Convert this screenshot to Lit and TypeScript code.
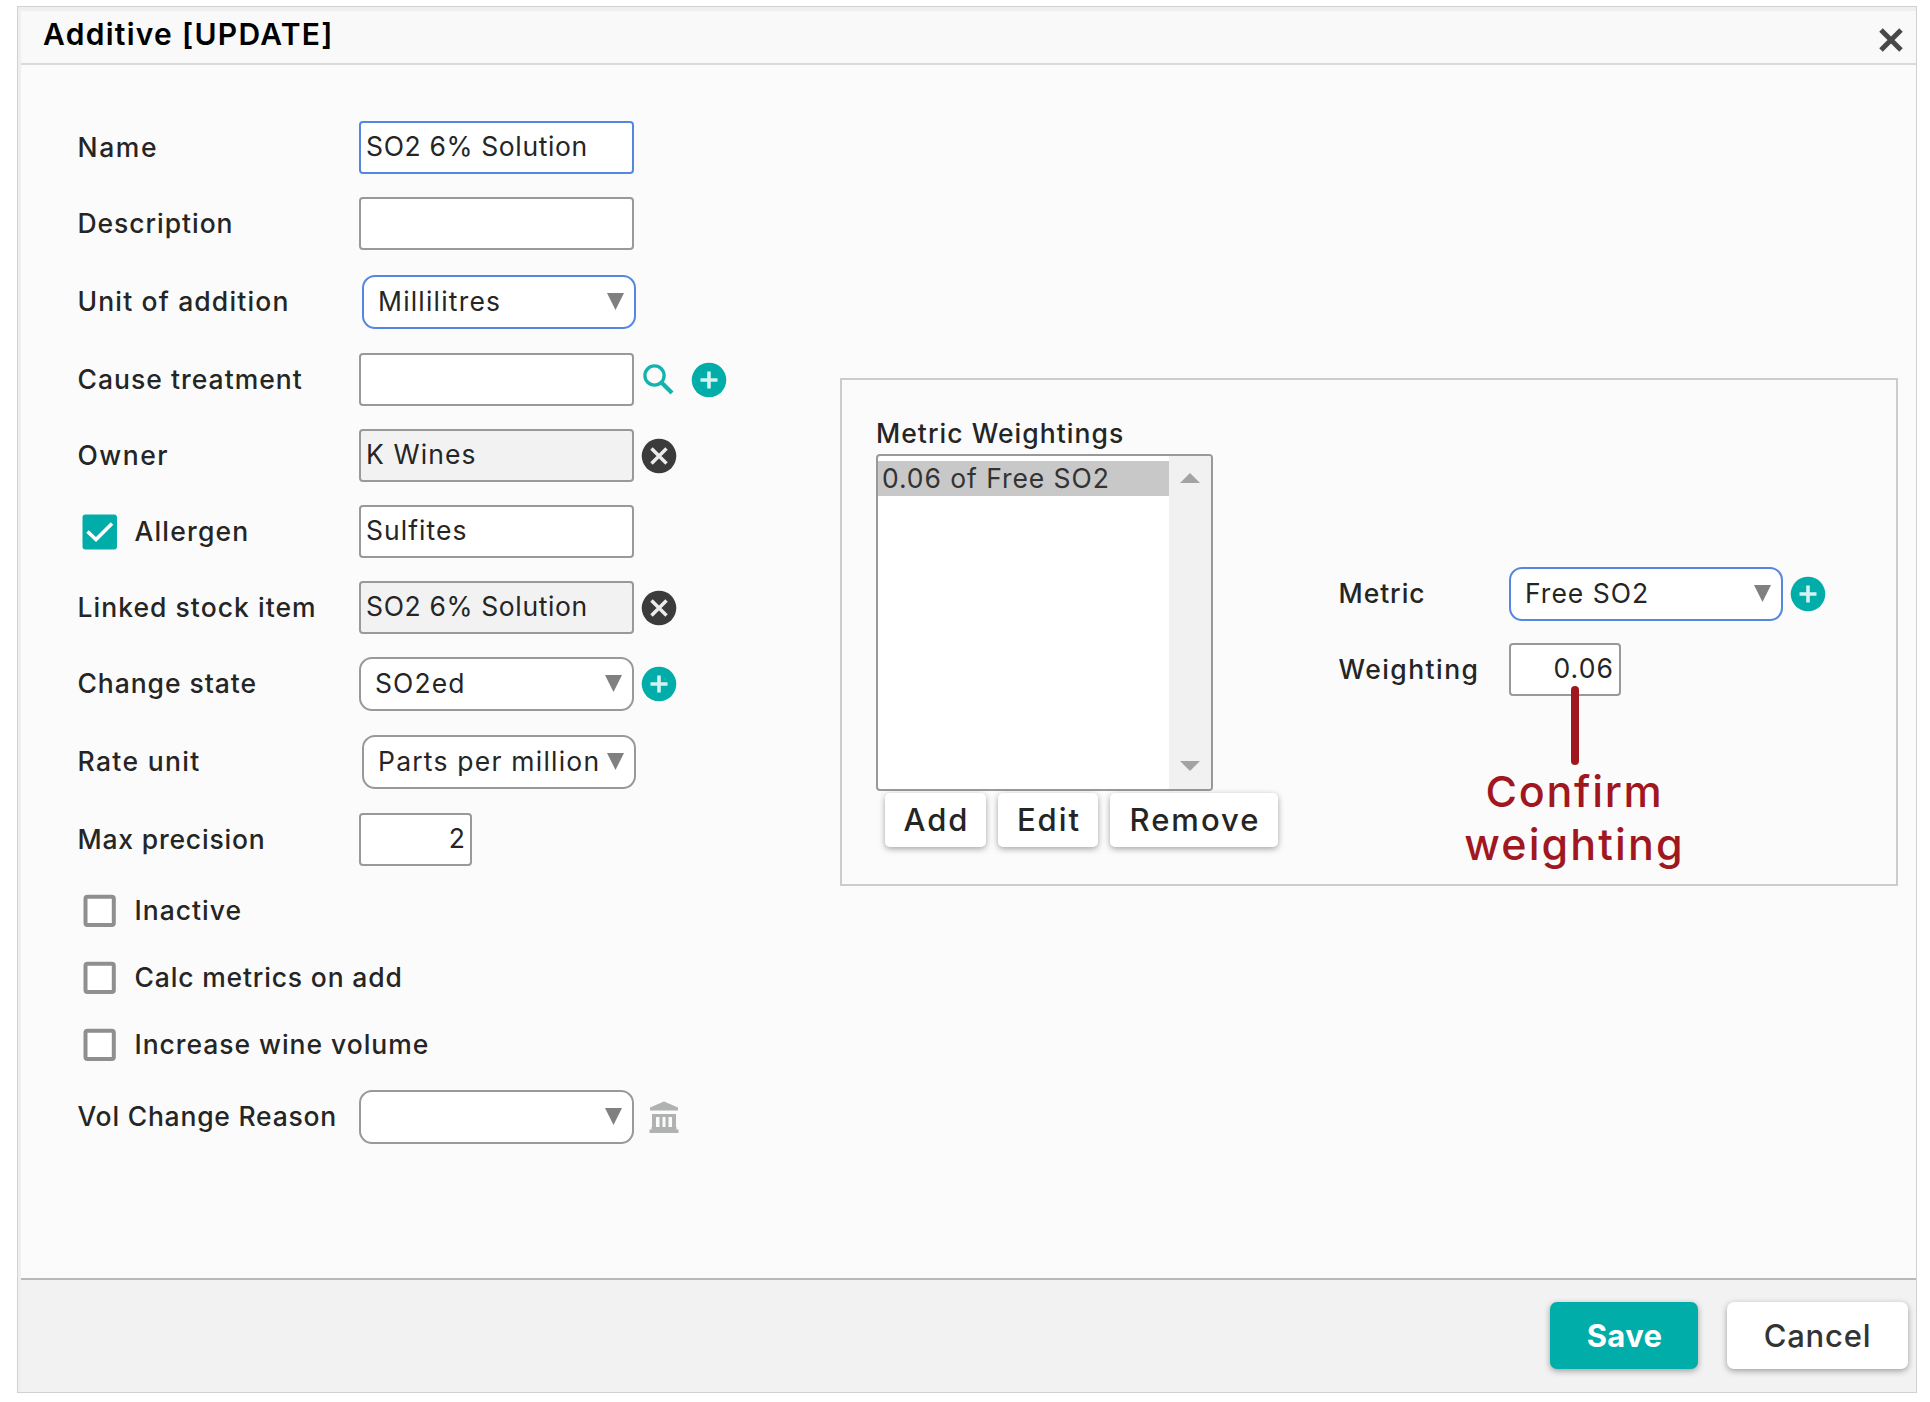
import { LitElement, html, css, nothing } from "lit";
import { customElement } from "lit/decorators.js";

type Icon = "search" | "plus" | "clear" | "bank";

interface Row {
  cls: string;
  label: string;
  /** Letter spacing of the label and of the value, in px. */
  track: number;
  valueTrack?: number;
  kind: "text" | "select" | "short" | "none";
  value?: string;
  check?: "on" | "off";
  active?: boolean;
  readonly?: boolean;
  icons?: Icon[];
}

const ROWS: Row[] = [
  { cls: "r-name", label: "Name", track: 1.6, kind: "text", value: "SO2 6% Solution", valueTrack: 0.63, active: true },
  { cls: "r-desc", label: "Description", track: 0.95, kind: "text" },
  { cls: "r-unit", label: "Unit of addition", track: 1.15, kind: "select", value: "Millilitres", valueTrack: 1.2, active: true },
  { cls: "r-cause", label: "Cause treatment", track: 1.02, kind: "text", icons: ["search", "plus"] },
  { cls: "r-owner", label: "Owner", track: 1.5, kind: "text", value: "K Wines", valueTrack: 1.1, readonly: true, icons: ["clear"] },
  { cls: "r-allergen", label: "Allergen", track: 1.2, kind: "text", value: "Sulfites", valueTrack: 1.05, check: "on" },
  { cls: "r-stock", label: "Linked stock item", track: 1.03, kind: "text", value: "SO2 6% Solution", valueTrack: 0.63, readonly: true, icons: ["clear"] },
  { cls: "r-state", label: "Change state", track: 0.93, kind: "select", value: "SO2ed", valueTrack: 1.1, icons: ["plus"] },
  { cls: "r-rate", label: "Rate unit", track: 1.35, kind: "select", value: "Parts per million", valueTrack: 1.22 },
  { cls: "r-max", label: "Max precision", track: 0.8, kind: "short", value: "2", valueTrack: 0 },
  { cls: "r-check", label: "Inactive", track: 1, kind: "none", check: "off" },
  { cls: "r-check", label: "Calc metrics on add", track: 0.83, kind: "none", check: "off" },
  { cls: "r-check", label: "Increase wine volume", track: 0.95, kind: "none", check: "off" },
  { cls: "r-vol", label: "Vol Change Reason", track: 0.77, kind: "select", value: "", icons: ["bank"] },
];

const METRIC_ROWS: Row[] = [
  { cls: "r-metric", label: "Metric", track: 0.95, kind: "select", value: "Free SO2", valueTrack: 1, active: true, icons: ["plus"] },
  { cls: "r-weight", label: "Weighting", track: 1.45, kind: "short", value: "0.06", valueTrack: 1.1 },
];

const ICONS = {
  search: html`<svg class="icon" width="36" height="36" viewBox="0 0 36 36">
    <circle cx="13.500" cy="13.500" r="9.600" fill="none" stroke="#14b3ae" stroke-width="3.300" />
    <path d="M20.500 20.500L31 31" stroke="#14b3ae" stroke-width="4.200" />
  </svg>`,
  plus: html`<svg class="icon" width="36" height="36" viewBox="0 0 36 36">
    <circle cx="18" cy="18" r="17.300" fill="#00ada8" />
    <path d="M18 9.500V26.500M9.500 18H26.500" stroke="#d4f2f1" stroke-width="3.600" />
  </svg>`,
  clear: html`<svg class="icon" width="36" height="36" viewBox="0 0 36 36">
    <circle cx="18" cy="18" r="17.300" fill="#3a3b3a" />
    <path d="M10.500 10.500L25.500 25.500M25.500 10.500L10.500 25.500" stroke="#ececec" stroke-width="3.500" />
  </svg>`,
  bank: html`<svg class="icon bank" width="30" height="32" viewBox="0 0 30 32">
    <path
      d="M15 0.500L29 6.500V9.500H1V6.500Z M3 13H27V16H3Z M3 16H7V26H3Z M10.500 16H13.500V26H10.500Z M16.500 16H19.500V26H16.500Z M23 16H27V26H23Z M2.500 26H27.500V28.500H29.500V32H0.500V28.500H2.500Z"
      fill="#b0b2b1"
    />
  </svg>`,
};

const checkbox = (state: "on" | "off") =>
  state === "on"
    ? html`<svg class="check" width="36" height="36" viewBox="0 0 36 36">
        <rect x="0.500" y="0.500" width="34.500" height="35" rx="3" fill="#00ada8" />
        <path d="M5.500 17.500L14 25.500L30 9.500" fill="none" stroke="#fff" stroke-width="3.600" />
      </svg>`
    : html`<svg class="check" width="36" height="36" viewBox="0 0 36 36">
        <rect x="3.500" y="3.700" width="28.300" height="28.300" rx="2" fill="#fff" stroke="#8f8f8f" stroke-width="4" />
      </svg>`;

const caret = html`<svg class="caret" width="17" height="17" viewBox="0 0 17 17">
  <path d="M0 0H17L8.500 17Z" fill="#808080" />
</svg>`;

@customElement("app-root")
export class AppRoot extends LitElement {
  static styles = css`
    :host {
      display: block;
      width: 1930px;
      height: 1402px;
      background: #fff;
      box-sizing: border-box;
      padding: 6px 13px 9px 17px;
      font-family: Inter, "Open Sans", sans-serif;
      font-size: 26.5px;
      color: #252525;
      overflow: hidden;
    }
    * {
      box-sizing: border-box;
    }
    svg {
      display: block;
      flex: none;
    }
    .dialog {
      display: flex;
      flex-direction: column;
      height: 1387px;
      width: 1900px;
      border: 1px solid #d1d1d1;
      background: #efefef;
      padding: 4px 0 0 3px;
    }
    .head {
      flex: none;
      height: 54px;
      background: #f9f9f9;
      border-bottom: 2px solid #dadada;
      display: flex;
      justify-content: space-between;
      padding: 0 13px 0 22px;
    }
    .title {
      font-size: 30px;
      line-height: 47px;
      font-weight: 600;
      color: #000;
      white-space: nowrap;
      letter-spacing: 1.28px;
    }
    .close {
      margin-top: 17px;
    }
    .body {
      flex: 1;
      background: #fbfbfb;
      display: flex;
      align-items: flex-start;
      padding-left: 57px;
    }
    .form {
      width: 762px;
      flex: none;
      padding-top: 56px;
    }
    .row {
      display: flex;
      align-items: center;
      height: 53px;
      margin-bottom: 23px;
    }
    .r-desc,
    .r-unit,
    .r-state,
    .r-rate {
      margin-bottom: 25px;
    }
    .r-max {
      margin-bottom: 18px;
    }
    .r-check {
      margin-bottom: 14px;
    }
    .r-vol {
      margin-top: 19px;
    }
    .lab {
      width: 281px;
      flex: none;
      display: flex;
      align-items: center;
      font-weight: 500;
      white-space: nowrap;
    }
    .label-text {
      padding-bottom: 2px;
      margin-left: -0.5px;
    }
    .check {
      margin: 1px 17px 0 4px;
    }
    .field {
      width: 275px;
      height: 53px;
      flex: none;
      background: #fff;
      border: 2px solid #999;
      border-radius: 4px;
      padding: 0 5px 4px;
      display: flex;
      align-items: center;
      white-space: nowrap;
    }
    .active {
      border-color: #5487e0;
    }
    .readonly {
      background: #f2f2f2;
    }
    .select {
      height: 54px;
      border-radius: 13px;
      padding: 0 10px 0 14px;
      justify-content: space-between;
    }
    .select .value {
      padding-bottom: 2px;
    }
    .r-unit .select,
    .r-rate .select {
      margin-left: 3px;
      width: 274px;
    }
    .short {
      width: 113px;
      justify-content: flex-end;
    }
    .icon {
      margin-left: 7px;
    }
    .icon + .icon {
      margin-left: 14px;
    }
    .bank {
      margin-left: 15px;
    }
    .panel {
      width: 1058px;
      height: 508px;
      margin-top: 313px;
      flex: none;
      border: 2px solid #ccc;
      display: flex;
      padding-left: 34px;
      position: relative;
    }
    .weights {
      width: 463px;
      padding-top: 34px;
      flex: none;
    }
    .heading {
      font-weight: 500;
      line-height: 38px;
      height: 40px;
      white-space: nowrap;
      letter-spacing: 1.04px;
    }
    .list {
      width: 337px;
      height: 337px;
      border: 2px solid #999;
      border-radius: 4px;
      background: #fff;
      display: flex;
      overflow: hidden;
    }
    .items {
      flex: 1;
      padding-top: 5px;
    }
    .item {
      height: 35px;
      line-height: 34px;
      padding-left: 4px;
      background: #c8c8c8;
      color: #333;
      letter-spacing: 0.93px;
      white-space: nowrap;
    }
    .bar {
      width: 42px;
      background: #f1f1f1;
      display: flex;
      flex-direction: column;
      align-items: center;
      justify-content: space-between;
      padding: 17px 0 18px;
    }
    .buttons {
      display: flex;
      gap: 12px;
      padding: 2px 0 0 9px;
    }
    .btn {
      height: 54px;
      border-radius: 5px;
      background: #fff;
      box-shadow: 0 2px 6px rgba(0, 0, 0, 0.35);
      font-size: 31px;
      font-weight: 500;
      display: flex;
      align-items: center;
      justify-content: center;
      flex: none;
      letter-spacing: 2px;
      padding: 0 0 1px 2px;
    }
    .b-add {
      width: 101px;
    }
    .b-edit {
      width: 100px;
    }
    .b-remove {
      width: 168px;
    }
    .metric {
      padding-top: 187px;
      width: 530px;
    }
    .metric .lab {
      width: 170px;
    }
    .metric .select {
      width: 274px;
    }
    .metric .short {
      width: 112px;
    }
    .note {
      position: absolute;
      left: 600px;
      top: 306px;
      width: 265px;
      display: flex;
      flex-direction: column;
      align-items: center;
      color: #a1171f;
      font-size: 43px;
      line-height: 53px;
      font-weight: 500;
      text-align: center;
    }
    .pin {
      width: 8px;
      height: 79px;
      border-radius: 4px;
      background: #a1171f;
    }
    .note-text {
      white-space: nowrap;
    }
    .n-confirm {
      letter-spacing: 1.7px;
    }
    .n-weighting {
      letter-spacing: 2.1px;
    }
    .foot {
      flex: none;
      height: 114px;
      border-top: 2px solid #b8b8b8;
      background: #f2f2f2;
      display: flex;
      justify-content: flex-end;
      gap: 29px;
      padding: 22px 8px 0 0;
    }
    .big {
      height: 67px;
      border-radius: 7px;
      color: #333;
      padding: 0;
      letter-spacing: 0.8px;
    }
    .save {
      width: 148px;
      background: #00ada8;
      color: #fff;
      font-weight: 700;
      letter-spacing: 0.3px;
      padding-left: 1px;
    }
    .cancel {
      width: 181px;
    }
  `;

  private row(r: Row) {
    const cls = `field ${r.kind} ${r.active ? "active" : ""} ${r.readonly ? "readonly" : ""}`;
    return html`<div class="row ${r.cls}">
      <div class="lab">
        ${r.check ? checkbox(r.check) : nothing}<span class="label-text" style="letter-spacing:${r.track}px">${r.label}</span>
      </div>
      ${r.kind === "none"
        ? nothing
        : html`<div class=${cls}>
            <span class="value" style="letter-spacing:${r.valueTrack ?? 0}px">${r.value ?? ""}</span>${r.kind === "select" ? caret : nothing}
          </div>`}
      ${(r.icons ?? []).map((i) => ICONS[i])}
    </div>`;
  }

  render() {
    return html`<div class="dialog">
      <div class="head">
        <div class="title">Additive [UPDATE]</div>
        <svg class="close" width="24" height="24" viewBox="0 0 24 24">
          <path d="M2 2L22 22M22 2L2 22" stroke="#484848" stroke-width="5" />
        </svg>
      </div>
      <div class="body">
        <div class="form">${ROWS.map((r) => this.row(r))}</div>
        <div class="panel">
          <div class="weights">
            <div class="heading">Metric Weightings</div>
            <div class="list">
              <div class="items"><div class="item">0.06 of Free SO2</div></div>
              <div class="bar">
                <svg width="20" height="10" viewBox="0 0 20 10"><path d="M0 10H20L10 0Z" fill="#a3a3a3" /></svg>
                <svg width="20" height="10" viewBox="0 0 20 10"><path d="M0 0H20L10 10Z" fill="#a3a3a3" /></svg>
              </div>
            </div>
            <div class="buttons">
              <div class="btn b-add">Add</div>
              <div class="btn b-edit">Edit</div>
              <div class="btn b-remove">Remove</div>
            </div>
          </div>
          <div class="metric">${METRIC_ROWS.map((r) => this.row(r))}</div>
          <div class="note">
            <div class="pin"></div>
            <div class="note-text n-confirm">Confirm</div>
            <div class="note-text n-weighting">weighting</div>
          </div>
        </div>
      </div>
      <div class="foot">
        <div class="btn big save">Save</div>
        <div class="btn big cancel">Cancel</div>
      </div>
    </div>`;
  }
}
